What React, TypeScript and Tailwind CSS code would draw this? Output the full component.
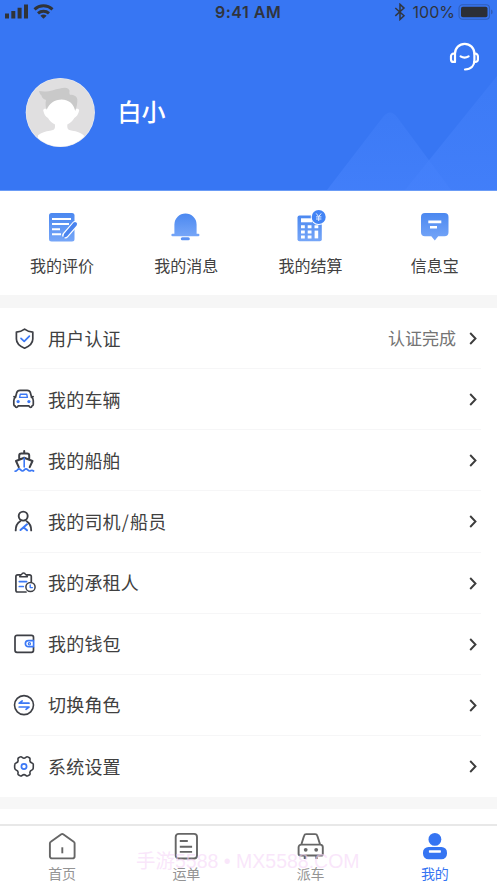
import type { ReactNode } from 'react';

const DARK = '#3d3f45';
const BLUE = '#3b78f5';

interface Item {
  label: ReactNode;
  key: string;
  icon: ReactNode;
  extra?: string;
}

const actions: Item[] = [
  {
    key: 'review',
    label: '我的评价',
    icon: (
      <>
        <rect x="3" y="3" width="25.5" height="28.5" rx="2.5" fill="url(#tile)" />
        <path d="M6 9h19M6 14h17M6 19.3h8M6 24.3h9" stroke="#fff" strokeWidth="1.9" />
        <path d="M19.5 25.2 29 14.4" stroke="#fff" strokeWidth="6.4" strokeLinecap="round" />
        <path d="M17 28.3l1-4.3L27.6 12.6q1.4-1.3 2.8 0q1.4 1.3.2 2.8L21 26.6z" fill="#4a84ef" />
      </>
    ),
  },
  {
    key: 'message',
    label: '我的消息',
    icon: (
      <>
        <path
          d="M4.4 23.7V14.5a11.1 11.1 0 0 1 22.2 0v9.2h1.6a1.2 1.2 0 0 1 0 2.5H2.6a1.2 1.2 0 0 1 0-2.5z"
          fill="url(#tile)"
        />
        <rect x="10.8" y="27.3" width="9" height="3" rx="1.5" fill="#5b92f3" />
      </>
    ),
  },
  {
    key: 'settle',
    label: '我的结算',
    icon: (
      <>
        <rect x="2.5" y="5.5" width="24.3" height="25.8" rx="2" fill="url(#tile)" />
        <path d="M6 10.3h11" stroke="#fff" strokeWidth="4" />
        <path
          d="M6 16.8h3.8M12.7 16.8h3.8M19.5 16.8h3.8M6 22h3.8M12.7 22h3.8M6 27h3.8M12.7 27h3.8"
          stroke="#fff"
          strokeWidth="3"
        />
        <path d="M21.4 20.6v7.8" stroke="#fff" strokeWidth="3.6" />
        <circle cx="23.7" cy="7" r="8" fill="#fff" />
        <circle cx="23.7" cy="7" r="7" fill="#4384f5" />
        <path d="M21.2 3.4l2.5 3.2 2.5-3.2M23.7 6.6v4.4M21 6.9h5.4M21 9h5.4" stroke="#e6efff" strokeWidth="1" fill="none" />
      </>
    ),
  },
  {
    key: 'info',
    label: '信息宝',
    icon: (
      <>
        <path
          d="M6 3h19.5a4 4 0 0 1 4 4v15.3a4 4 0 0 1-4 4h-6.3L15.8 30.4 12.3 26.3H6a4 4 0 0 1-4-4V7a4 4 0 0 1 4-4z"
          fill="url(#tile)"
        />
        <path d="M9.3 11.9h13M11 17.3h7" stroke="#fff" strokeWidth="2.6" />
      </>
    ),
  },
];

const rows: Item[] = [
  {
    key: 'auth',
    label: '用户认证',
    extra: '认证完成',
    icon: (
      <>
        <path d="M12.6 2.2c2.7 2.1 5 2.7 8.2 2.9v6.9c0 4.500-3.600 7.300-8.200 9.200c-4.600-1.900-8.200-4.700-8.200-9.200V5.100c3.200-.2 5.500-.8 8.200-2.900z" />
        <path d="M9 11.300l3.200 3.100 5.200-5.300" stroke={BLUE} />
      </>
    ),
  },
  {
    key: 'car',
    label: '我的车辆',
    icon: (
      <>
        <path d="M8 2.400h7.200c1.800 0 2.800.7 3.200 2.300l1.100 4.300c1.200.9 1.800 2.100 1.800 3.800v3.800c0 .8-.5 1.200-1.300 1.200c-.2 1-.7 1.500-1.500 1.500s-1.300-.5-1.600-1.500H6.200c-.3 1-.8 1.500-1.600 1.500s-1.300-.5-1.500-1.500c-.8 0-1.300-.4-1.300-1.200v-3.800c0-1.700.6-2.900 1.800-3.800l1.100-4.300c.4-1.600 1.500-2.300 3.300-2.300zM3.600 9.200L2 8.600M19.400 9.200l1.700-.6" />
        <path d="M8.300 6.200h6.400l.7 3.200H7.600z" stroke={BLUE} strokeWidth="1.400" />
        <circle cx="6.100" cy="13.600" r="1.600" fill={BLUE} stroke="none" />
        <circle cx="16.900" cy="13.600" r="1.600" fill={BLUE} stroke="none" />
      </>
    ),
  },
  {
    key: 'ship',
    label: '我的船舶',
    icon: (
      <>
        <path d="M12.200 2v2.500M9 4.600h6.400M7.200 9.500V6.600c0-1.300.7-2 2-2h6c1.300 0 2 .7 2 2v2.900M6.800 18.200L4 12l8.200-3.300 8.300 3.300-2.800 6.200" strokeWidth="2" />
        <path d="M12.200 9v9" stroke={BLUE} strokeWidth="1.600" />
        <path d="M3.200 22.200c2 0 2.200-2.300 3.800-2.300s1.800 2.100 3.500 2.100 1.900-2.100 3.500-2.100 1.900 2.100 3.600 2.100 1.800-1.700 4 0" stroke={BLUE} />
      </>
    ),
  },
  {
    key: 'driver',
    label: (
      <>
        我的司机<span className="px-[1px]">/</span>船员
      </>
    ),
    icon: (
      <>
        <circle cx="11.200" cy="6.100" r="4.500" strokeWidth="1.900" />
        <path d="M3.700 20.400c0-4.200 1.600-7.400 4.500-9.200M19.200 20.400c0-4.200-1.700-7.400-4.600-9.200" strokeWidth="1.900" />
        <path d="M15 14.300L8.500 20M11.500 17.300l3.500 3" stroke={BLUE} strokeWidth="2" />
      </>
    ),
  },
  {
    key: 'tenant',
    label: '我的承租人',
    icon: (
      <>
        <path d="M14 21H5.600a1.700 1.700 0 0 1-1.700-1.700V5.600a1.700 1.700 0 0 1 1.700-1.700h12a1.700 1.700 0 0 1 1.700 1.700v5" />
        <path d="M7.700 5.700c0-1.500.8-2 2-2.300a1.900 1.900 0 0 1 3.700 0c1.200.3 2 .8 2 2.300z" fill="#fff" strokeWidth="1.500" />
        <path d="M7.300 10.600h7.300M7.300 15.500h4" stroke={BLUE} />
        <circle cx="18.500" cy="16" r="4.600" fill="#fff" strokeWidth="1.500" />
        <path d="M18.200 14v2.600h2.200" stroke={BLUE} strokeWidth="1.400" />
      </>
    ),
  },
  {
    key: 'wallet',
    label: '我的钱包',
    icon: (
      <>
        <path d="M21.500 8V5.300a2 2 0 0 0-2-2H5a2 2 0 0 0-2 2v13a2 2 0 0 0 2 2h14.500a2 2 0 0 0 2-2v-3" />
        <path d="M21.600 8.700h-5.200a3 3 0 0 0 0 6h5.200z" stroke={BLUE} />
        <circle cx="17.400" cy="11.700" r="1.100" stroke={BLUE} strokeWidth="1.200" />
      </>
    ),
  },
  {
    key: 'switch',
    label: '切换角色',
    icon: (
      <>
        <circle cx="12" cy="12.100" r="9.500" strokeWidth="1.600" />
        <path d="M17 10.200H7.200l3-2.300M7.200 14h9.800l-3 2.300" stroke={BLUE} />
      </>
    ),
  },
  {
    key: 'settings',
    label: '系统设置',
    icon: (
      <>
        <path d="M8.300 1.900c.8-.4 1.300-.1 1.900.5c1.200 1.100 2.400 1.100 3.600 0c.6-.6 1.100-.9 1.900-.5l1.600.9c.8.5.9 1 .7 1.900c-.4 1.700.3 2.800 1.900 3.200c.9.300 1.300.6 1.400 1.500c0 .6 0 3.400-.1 4c-.1.900-.5 1.200-1.300 1.500c-1.600.5-2.300 1.500-1.900 3.200c.2.900.1 1.500-.7 1.900l-1.600.9c-.8.400-1.300.1-1.900-.5c-1.200-1.100-2.400-1.100-3.600 0c-.6.600-1.100.9-1.900.5l-1.600-.9c-.8-.4-.9-1-.7-1.900c.4-1.700-.3-2.700-1.900-3.200c-.8-.3-1.200-.6-1.300-1.500c-.1-.6-.1-3.400 0-4c.1-.9.500-1.200 1.300-1.500c1.600-.4 2.300-1.500 1.900-3.200c-.2-.9-.1-1.400.7-1.900z" strokeWidth="1.600" />
        <circle cx="12" cy="11.500" r="2.600" stroke={BLUE} />
      </>
    ),
  },
];

const tabs: Item[] = [
  {
    key: 'home',
    label: '首页',
    icon: (
      <>
        <path d="M1.900 11.300a2 2 0 0 1 .9-1.600L13.300 2.300a1.600 1.600 0 0 1 1.900 0l10.500 7.400a2 2 0 0 1 .9 1.600v12.900a2.200 2.200 0 0 1-2.200 2.200H4.100a2.200 2.200 0 0 1-2.200-2.200z" />
        <path d="M14.300 15.300v6" />
      </>
    ),
  },
  {
    key: 'waybill',
    label: '运单',
    icon: (
      <>
        <rect x="3.700" y="1.900" width="21.300" height="24.600" rx="3" />
        <path d="M7.800 9h8M7.800 14.700h12.300M7.800 19.900h12.300" />
      </>
    ),
  },
  {
    key: 'dispatch',
    label: '派车',
    icon: (
      <>
        <path d="M4.300 12.500L7.100 3.700a2.200 2.200 0 0 1 2.100-1.600h9a2.200 2.200 0 0 1 2.100 1.600l2.800 8.800M4.200 12.600h19a2.600 2.600 0 0 1 2.600 2.600v6.700a1.600 1.600 0 0 1-1.600 1.600h-21a1.600 1.600 0 0 1-1.600-1.600v-6.700a2.600 2.600 0 0 1 2.600-2.600z" />
        <path d="M8 24v3M19.500 24v3" strokeWidth="2.500" />
        <circle cx="8.700" cy="17.800" r="1.900" fill="#666" stroke="none" />
        <circle cx="19.200" cy="17.800" r="1.900" fill="#666" stroke="none" />
      </>
    ),
  },
  {
    key: 'mine',
    label: '我的',
    icon: (
      <g stroke="none" fill="#3574f2">
        <circle cx="13.900" cy="7.400" r="6.400" />
        <rect x="2" y="15" width="24" height="12.300" rx="5.500" />
        <rect x="7.900" y="18.200" width="12" height="2.500" rx=".6" fill="#fff" />
      </g>
    ),
  },
];

function StatusBar() {
  return (
    <div className="relative flex h-6 items-center justify-between pl-1 pr-1 text-[16px] font-medium text-[#30343d] font-[Inter,sans-serif]">
      <svg className="h-6 w-[52px]" viewBox="0 0 52 24" fill="none">
        <path d="M3 18.500v-5M9.300 18.500v-7.500M15.600 18.500V7.800M22 18.500V4.500" stroke="#303338" strokeWidth="4" />
        <g stroke="#303338" strokeWidth="3">
          <path d="M30.500 9.300a13.500 13.500 0 0 1 18 0M34 13.400a8.300 8.300 0 0 1 11 0" />
        </g>
        <path d="M36.400 15.800a4.900 4.900 0 0 1 6.200 0l-3.100 3z" fill="#303338" />
      </svg>
      <span className="absolute left-[215px] whitespace-nowrap font-semibold tracking-[0.500px]">9:41 AM</span>
      <div className="flex items-center">
        <svg className="mr-[7px] h-[18px] w-3" viewBox="0 0 12 18" fill="none" stroke="#303640" strokeWidth="1.500">
          <path d="M1.300 5L10 12.800 6 16.500V1.300L10 5.100 1.300 12.900" />
        </svg>
        <span className="font-normal">100%</span>
        <svg className="ml-[3px] h-4 w-[35px]" viewBox="0 0 35 16">
          <rect x="1" y=".8" width="30.500" height="14.400" rx="3.500" fill="none" stroke="#315eb8" strokeWidth="1.100" />
          <rect x="3" y="2.700" width="26.500" height="10.600" rx="1.800" fill="#2c2f36" />
          <path d="M33 5.600v4.800q1.700-.5 1.700-2.400T33 5.600" fill="#315eb8" />
        </svg>
      </div>
    </div>
  );
}

function Header() {
  return (
    <header className="relative h-[190px] bg-[#3776f3]">
      {/* background mountains */}
      <svg className="absolute inset-0 h-full w-full" viewBox="0 0 497 190">
        <defs>
          <linearGradient id="hill" x1="0" y1="0" x2="0" y2="1">
            <stop offset="0" stopColor="#4380f9" stopOpacity=".45" />
            <stop offset="1" stopColor="#4581fb" stopOpacity=".75" />
          </linearGradient>
        </defs>
        <path d="M327 190L383 117Q390 108 397 117L451 190z" fill="url(#hill)" />
        <path d="M405 190L497 76V190z" fill="url(#hill)" />
      </svg>
      <StatusBar />
      <svg
        className="absolute left-[449px] top-[42px] h-[30px] w-[31px]"
        viewBox="0 0 31 30"
        fill="none"
        stroke="#fff"
        strokeWidth="2.200"
        strokeLinecap="round"
      >
        <path d="M6 19.500V11.500a9.700 9.700 0 0 1 19.400 0v6.500c0 5.500-3.200 9.500-9.400 9.500" />
        <path d="M6 11.700H4.500a2.500 2.500 0 0 0-2.500 2.500v3.200a2.500 2.500 0 0 0 2.500 2.500H6M25.400 11.700h1a2.500 2.500 0 0 1 2.500 2.500v3.200a2.500 2.500 0 0 1-2.500 2.500h-1" />
        <path d="M11.600 14.300q4 2.600 8 0" />
      </svg>
      <div className="relative flex items-center pl-[25px] pt-[53px]">
        <svg className="h-[71px] w-[71px]" viewBox="0 0 71 71">
          <clipPath id="face">
            <circle cx="35.300" cy="35.500" r="34" />
          </clipPath>
          <circle cx="35.300" cy="35.500" r="34.600" fill="#e9ebf2" />
          <g clipPath="url(#face)">
            <path d="M0 0h71v71H0z" fill="#e0dfe0" />
            <path
              d="M21.500 32C24 25.500 30 22 36.500 22S48.500 25.500 50.500 32c2-.8 4-.2 3.600 1.800C53.500 37 51.500 40 49.300 41c-1.500 3-4 5-7 6.500V50c0 2.500 2 3.300 5 3.800 4.500.7 8 1.700 11.500 4.500V71H13V58.300c3.500-2.800 7.500-3.800 12-4.500 3-.5 5-1.300 5-3.800v-2.500c-3-1.500-5.500-3.500-7-6.500-2.500-1-4-4-4.700-7.200-.4-2 1.400-2.600 3.200-1.800z"
              fill="#fff"
            />
            <path
              d="M14 14c5 .9 10 .4 14-.8c4-1.300 8-2.200 12-2.500c2.500 0 4.300 1.300 4.600 3.300c-.4 1.300-.3 2.800.4 3.700c3.500-.2 7 1.300 7.300 4.600c.2 4-.6 8-2.100 11.700c-1.200-6.500-6-11.500-13.500-11.500c-7 0-12.500 4-15 10.200c-1.200-3-1.500-6-.7-9.700c-2.500-1-4.300-2.500-4.500-4.500c-1.200-1-2.200-2.600-2.500-4.500z"
              fill="#c9c9c9"
            />
          </g>
        </svg>
        <h1 className="-mt-[3px] pl-[21.500px] text-[24px] font-medium leading-8 text-white">白小</h1>
      </div>
    </header>
  );
}

export default function App() {
  return (
    <div className="relative h-[883px] w-[497px] overflow-hidden bg-white font-['Noto_Sans_CJK_SC',sans-serif]">
      <Header />

      <section className="grid h-[105px] grid-cols-4 border-t border-[#6b9cf6] pt-[19px]">
        {actions.map((a) => (
          <div key={a.key} className="flex flex-col items-center">
            <svg className="h-8 w-8 overflow-visible" viewBox="0 0 32 32" fill="none">
              <defs>
                <linearGradient id="tile" x1="0" y1="0" x2="0" y2="1">
                  <stop offset="0" stopColor="#4b88f0" />
                  <stop offset="1" stopColor="#76a6f8" />
                </linearGradient>
              </defs>
              {a.icon}
            </svg>
            <span className="mt-[11px] text-[16px] leading-6 text-[#414141]">{a.label}</span>
          </div>
        ))}
      </section>

      <div className="h-[13px] bg-[#f6f6f6]" />

      <section className="h-[489px]">
        {rows.map((r, i) => (
          <div key={r.key} className="relative flex h-[61.150px] items-center pl-3 pr-5">
            <svg
              className="h-6 w-6 shrink-0"
              viewBox="0 0 24 24"
              fill="none"
              stroke={DARK}
              strokeWidth="1.700"
              strokeLinejoin="round"
              strokeLinecap="round"
            >
              {r.icon}
            </svg>
            <span className="-mt-[2px] ml-3 flex-1 text-[18px] leading-6 tracking-[0.200px] text-[#404040]">{r.label}</span>
            {r.extra && <span className="-mt-[2px] mr-[13px] text-[17px] leading-6 text-[#747474]">{r.extra}</span>}
            <svg className="h-[13px] w-2" viewBox="0 0 8 13" fill="none" stroke="#3c3c3c" strokeWidth="1.900">
              <path d="M1.200 1L6.500 6.500l-5.300 5.500" />
            </svg>
            {i < rows.length - 1 && <div className="absolute bottom-0 left-5 right-4 h-px bg-[#f6f6f7]" />}
          </div>
        ))}
      </section>

      <div className="h-3 bg-[#f7f7f7]" />

      <nav className="mt-[15px] grid h-[59px] grid-cols-4 border-t-2 border-[#e8e8e8] pt-1.5">
        {tabs.map((t) => (
          <div key={t.key} className="flex flex-col items-center">
            <svg
              className="h-7 w-7"
              viewBox="0 0 28 28"
              fill="none"
              stroke="#666"
              strokeWidth="1.900"
              strokeLinejoin="round"
            >
              {t.icon}
            </svg>
            <span
              className={
                t.key === 'mine'
                  ? 'mt-1 text-[14px] leading-[18px] text-[#3574f2]'
                  : 'mt-1 text-[14px] leading-[18px] text-[#949494]'
              }
            >
              {t.label}
            </span>
          </div>
        ))}
      </nav>

      <div className="absolute left-[136px] top-[849px] whitespace-nowrap text-[19.500px] leading-6 text-[#f6d5f8]/60 font-['Liberation_Sans','Noto_Sans_CJK_SC',sans-serif]">
        手游5588 • MX5588.COM
      </div>
    </div>
  );
}
